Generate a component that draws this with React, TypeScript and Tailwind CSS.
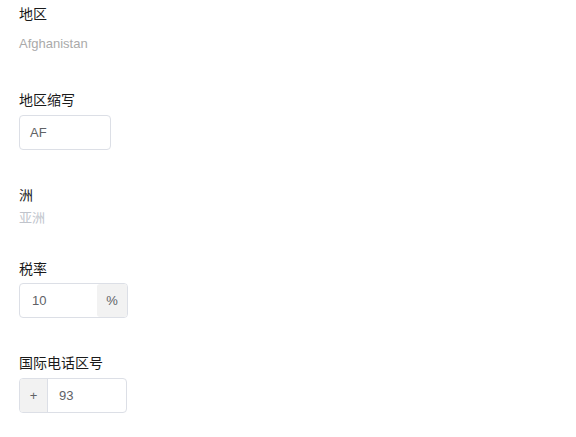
export default function App() {
  return (
    <div
      className="min-h-[437px] w-[576px] bg-white pl-[19px] pt-[4px] text-[14px]"
      style={{ fontFamily: '"Liberation Sans", "Noto Sans CJK SC", sans-serif' }}
    >
      {/* 地区 */}
      <div className="h-5 leading-5 text-[#1a1a1a]">地区</div>
      <div className="mt-[10px] h-5 text-[13px] leading-5 text-[#aaaaaa]">Afghanistan</div>

      {/* 地区缩写 */}
      <div className="mt-[36px] h-5 leading-5 text-[#1a1a1a]">地区缩写</div>
      <div className="mt-[5px] flex h-[35px] w-[92px] items-center rounded-[4px] border border-[#dcdfe6] pl-[10px] text-[13px] text-[#606266]">
        AF
      </div>

      {/* 洲 */}
      <div className="mt-[35px] h-5 leading-5 text-[#1a1a1a]">洲</div>
      <div className="mt-[3px] h-5 text-[13px] leading-5 text-[#c0c4cc]">亚洲</div>

      {/* 税率 */}
      <div className="mt-[31px] h-5 leading-5 text-[#1a1a1a]">税率</div>
      <div className="mt-[4px] flex h-[35px] w-[109px] rounded-[4px] border border-[#dcdfe6] text-[13px] text-[#606266]">
        <div className="flex flex-1 items-center pl-[12px]">10</div>
        <div className="flex w-[30px] items-center justify-center rounded-[3px] bg-[#f2f2f2]">%</div>
      </div>

      {/* 国际电话区号 */}
      <div className="mt-[35px] h-5 leading-5 text-[#1a1a1a]">国际电话区号</div>
      <div className="mt-[5px] flex h-[35px] w-[108px] rounded-[4px] border border-[#dcdfe6] text-[13px] text-[#606266]">
        <div className="flex w-[28px] items-center justify-center rounded-l-[3px] border-r border-[#dcdfe6] bg-[#f2f2f2]">+</div>
        <div className="flex flex-1 items-center pl-[11px]">93</div>
      </div>
    </div>
  );
}
